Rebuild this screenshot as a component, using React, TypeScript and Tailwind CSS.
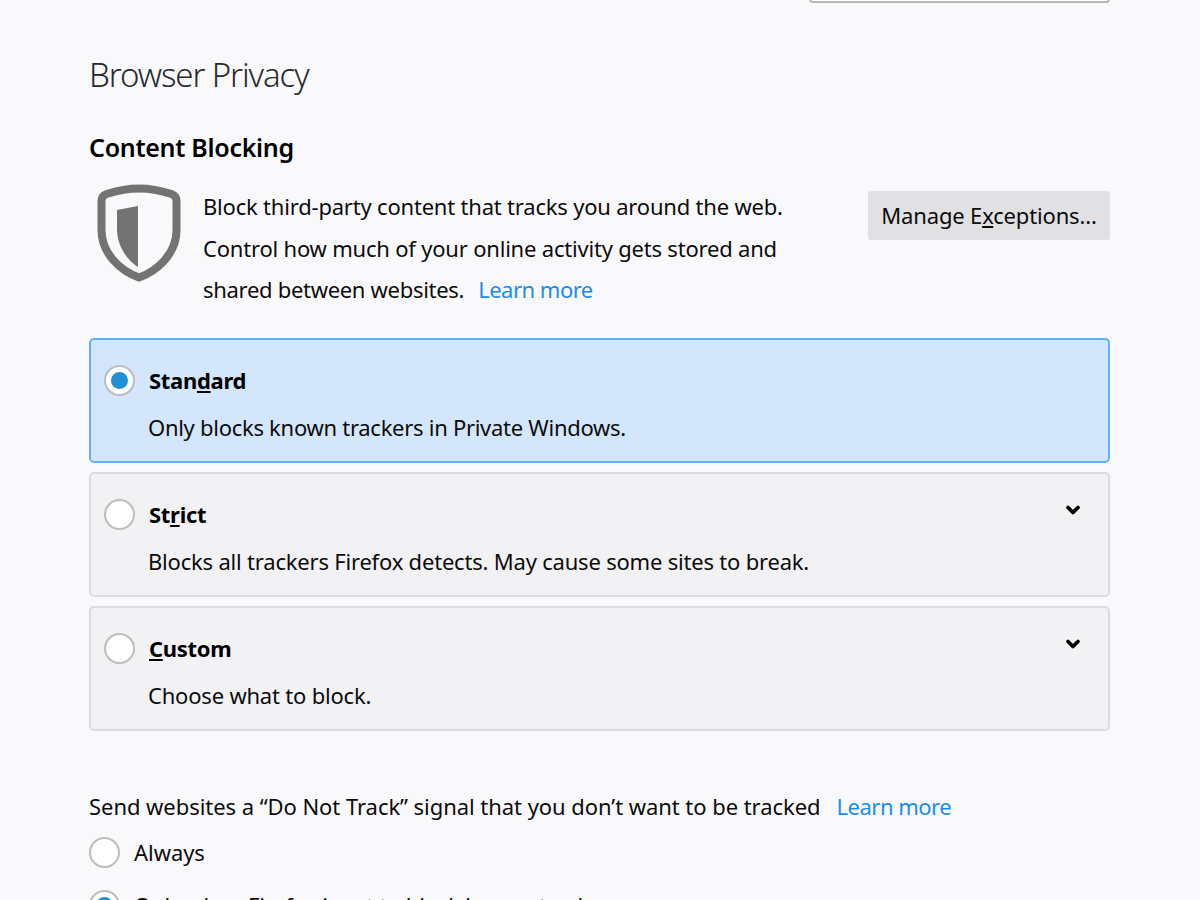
import { ChevronDown } from 'lucide-react'

const font = { fontFamily: '"Noto Sans", "Open Sans", sans-serif' }

function Radio({ checked = false }: { checked?: boolean }) {
  return (
    <span className="flex h-[31px] w-[31px] shrink-0 items-center justify-center rounded-full border-2 border-[#bdbdbd] bg-white">
      {checked && <span className="h-[17px] w-[17px] rounded-full bg-[#1f8fd6]" />}
    </span>
  )
}

function BlockingOption({
  before,
  under,
  after,
  description,
  checked = false,
  expandable = false,
}: {
  before: string
  under: string
  after: string
  description: string
  checked?: boolean
  expandable?: boolean
}) {
  return (
    <div
      className={`relative h-[125px] rounded-[5px] border-2 pl-[13px] pt-[25px] ${
        checked ? 'border-[#60b0fa] bg-[#d3e6fc]' : 'border-[#dcdcdf] bg-[#f2f2f4]'
      }`}
    >
      <div className="flex items-center gap-[14px]">
        <Radio checked={checked} />
        <span className="text-[22px] font-bold leading-[31px] tracking-[-0.3px] text-black">
          {before}
          <span className="underline underline-offset-2">{under}</span>
          {after}
        </span>
      </div>
      <p className={`ml-[44px] mt-[16px] text-[22px] leading-[31px] text-[#0c0c0d] ${checked ? 'tracking-[-0.28px]' : 'tracking-[-0.2px]'}`}>
        {description}
      </p>
      {expandable && (
        <ChevronDown className="absolute right-[25px] top-[26px] h-[20px] w-[20px] text-black" strokeWidth={4.5} />
      )}
    </div>
  )
}

export default function App() {
  return (
    <div className="h-[900px] overflow-hidden bg-[#f9f9fb] pl-[89px] pr-[90px] text-[#0c0c0d]" style={font}>
      {/* button cut off by the top of the page */}
      <div className="-mt-[45px] ml-[720px] h-[48px] rounded-[4px] border-2 border-[#b5b5b7] bg-white" />

      <h1 className="mt-[47px] text-[33px] font-light leading-[50px] tracking-[-1.1px] text-[#2a2a2e]">Browser Privacy</h1>

      <h2 className="mt-[28px] text-[25px] font-semibold leading-[38px] tracking-[-0.3px] text-black">Content Blocking</h2>

      <div className="mt-[20px] flex">
        <svg className="-mt-[2px] ml-[8px] shrink-0" width="84" height="98" viewBox="0 0 84 98">
          <path
            d="M42 4.500 C31 4.500 19 7 9.500 10 C6 11.200 4.500 13.500 4.500 17 L4.500 46 C4.500 70 24 87 42 93.500 C60 87 79.500 70 79.500 46 L79.500 17 C79.500 13.500 78 11.200 74.500 10 C65 7 53 4.500 42 4.500 Z"
            fill="none"
            stroke="#737373"
            strokeWidth="8"
            strokeLinejoin="round"
          />
          <path d="M41 22 L41 83 C30 76 20 62 20 45 L20 26 Z" fill="#737373" />
        </svg>
        <div className="ml-[22px] w-[640px] text-[22px] leading-[41.500px] tracking-[-0.2px]">
          <p>Block third-party content that tracks you around the web.</p>
          <p>Control how much of your online activity gets stored and</p>
          <p>
            <span className="tracking-[-0.3px]">shared between websites.</span>
            <span className="ml-[14px] tracking-[-0.5px] text-[#1a8cf0]">Learn more</span>
          </p>
        </div>
        <button className="ml-auto mt-[5px] h-[49px] w-[242px] shrink-0 rounded-[3px] bg-[#e1e1e3] text-center text-[22px] tracking-[-0.16px]">
          Manage E<span className="underline underline-offset-2">x</span>ceptions...
        </button>
      </div>

      <div className="mt-[27px] flex flex-col gap-[9px]">
        <BlockingOption
          checked
          before="Stan"
          under="d"
          after="ard"
          description="Only blocks known trackers in Private Windows."
        />
        <BlockingOption
          expandable
          before="St"
          under="r"
          after="ict"
          description="Blocks all trackers Firefox detects. May cause some sites to break."
        />
        <BlockingOption expandable before="" under="C" after="ustom" description="Choose what to block." />
      </div>

      <p className="mt-[59px] text-[22px] leading-[33px] tracking-[-0.05px]">
        Send websites a “Do Not Track” signal that you don’t want to be tracked
        <span className="ml-[16px] tracking-[-0.5px] text-[#1a8cf0]">Learn more</span>
      </p>

      <div className="mt-[14px] flex items-center gap-[14px]">
        <Radio />
        <span className="text-[22px] leading-[31px] tracking-[-0.05px]">Always</span>
      </div>
      <div className="mt-[22px] flex items-center gap-[14px]">
        <Radio checked />
        <span className="text-[22px] leading-[31px] tracking-[-0.2px]">Only when Firefox is set to block known trackers</span>
      </div>
    </div>
  )
}
